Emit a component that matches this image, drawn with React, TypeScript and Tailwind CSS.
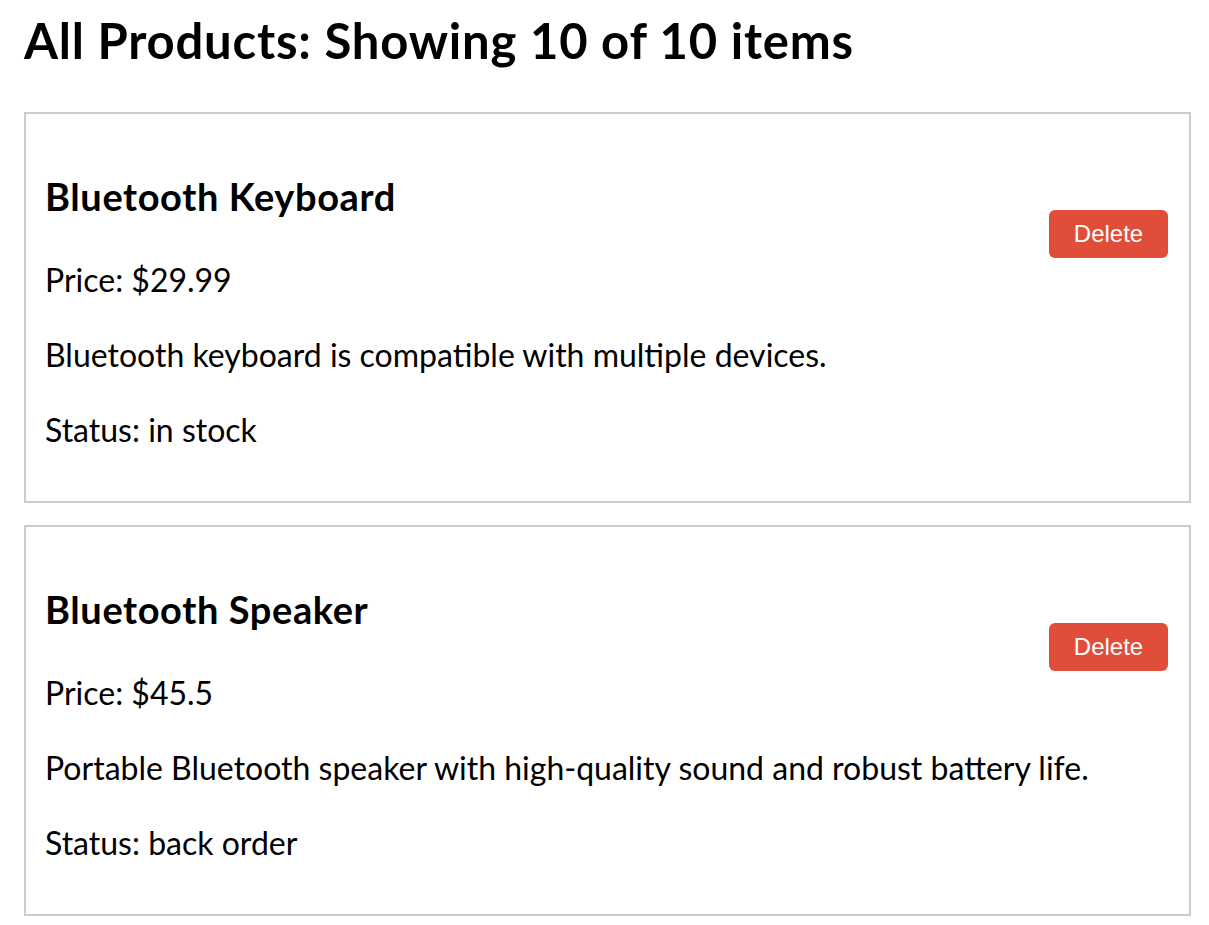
import React from "react";

type Product = {
  name: string;
  price: string;
  description: string;
  status: string;
};

const products: Product[] = [
  {
    name: "Bluetooth Keyboard",
    price: "$29.99",
    description: "Bluetooth keyboard is compatible with multiple devices.",
    status: "in stock",
  },
  {
    name: "Bluetooth Speaker",
    price: "$45.5",
    description:
      "Portable Bluetooth speaker with high-quality sound and robust battery life.",
    status: "back order",
  },
];

function ProductCard({ p }: { p: Product }) {
  return (
    <div className="flex w-[1167px] items-start justify-between border-2 border-[#cccccc] pt-[55px] pb-[34px] pl-[19px] pr-[21px]">
      <div className="flex min-w-0 flex-1 flex-col">
        <h2 className="m-0 whitespace-nowrap text-[38px] font-bold leading-[54px] tracking-[0.6px] text-black">
          {p.name}
        </h2>
        <div className="mt-[19px] flex flex-col whitespace-nowrap text-[32px] leading-[75px] text-black">
          <p className="m-0">Price: {p.price}</p>
          <p className="m-0">{p.description}</p>
          <p className="m-0">Status: {p.status}</p>
        </div>
      </div>
      <button className="mt-[41px] flex h-[48px] w-[119px] shrink-0 items-center justify-center whitespace-nowrap rounded-[6px] bg-[#e04e39] font-['Liberation_Sans',Arial,sans-serif] text-[24px] text-white">
        Delete
      </button>
    </div>
  );
}

export default function App() {
  return (
    <div className="min-h-screen bg-white pl-[24px] font-['Lato','Open_Sans',sans-serif] text-black">
      <h1 className="m-0 whitespace-nowrap pt-[4px] text-[49px] font-bold leading-[72px] tracking-[0.8px]">
        All Products: Showing 10 of 10 items
      </h1>
      <div className="mt-[36px] flex flex-col gap-[22px]">
        {products.map((p) => (
          <ProductCard key={p.name} p={p} />
        ))}
      </div>
    </div>
  );
}
